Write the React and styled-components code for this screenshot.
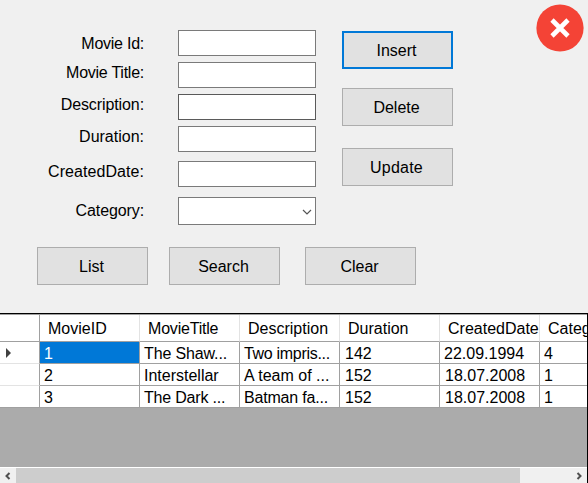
import React from "react";
import styled, { createGlobalStyle } from "styled-components";

const GlobalStyle = createGlobalStyle`
  * { box-sizing: border-box; }
  body { margin: 0; overflow: hidden; }
  button, input { font: inherit; border-radius: 0; }
`;

const Window = styled.main`
  width: 588px;
  height: 483px;
  display: flex;
  flex-direction: column;
  overflow: hidden;
  background: #f0f0f0;
  color: #000;
  font: 16px/18px "Liberation Sans", Arial, sans-serif;
`;

const Editor = styled.section`
  display: flex;
  height: 247px;
`;

const Fields = styled.div`
  width: 316px;
  padding-top: 30px;
`;

const Field = styled.label`
  display: flex;
  justify-content: space-between;
  height: ${(p) => p.$height || 26}px;
  margin-bottom: ${(p) => p.$gap}px;
`;

const Caption = styled.span`
  width: 144px;
  padding-top: ${(p) => p.$top}px;
  text-align: right;
  white-space: nowrap;
  letter-spacing: ${(p) => p.$tracking || 0}px;
`;

const TextBox = styled.input`
  width: 138px;
  height: 26px;
  padding: 2px 4px;
  border: 1px solid ${(p) => (p.$dark ? "#5a5a5a" : "#7a7a7a")};
  background: #fff;
  outline: none;
`;

const ComboBox = styled.div`
  display: flex;
  align-items: center;
  justify-content: flex-end;
  width: 138px;
  height: 28px;
  padding: 2px 3px 0 0;
  border: 1px solid #7a7a7a;
  background: #fff;
`;

const Actions = styled.div`
  display: flex;
  flex-direction: column;
  padding: 31px 0 0 26px;
`;

const Button = styled.button`
  width: 111px;
  height: 38px;
  padding: 2px 2px 0 0;
  margin-bottom: ${(p) => p.$gap || 0}px;
  border: ${(p) => (p.$focused ? "2px solid #0078d7" : "1px solid #adadad")};
  background: #e1e1e1;
  color: #000;
  line-height: 18px;
  letter-spacing: ${(p) => p.$tracking || 0}px;
`;

const CloseButton = styled.button`
  width: 48px;
  height: 48px;
  margin: 4px 4px 0 auto;
  padding: 0;
  border: 0;
  background: none;
  svg { display: block; }
`;

const Commands = styled.div`
  display: flex;
  height: 66px;
  padding-left: 37px;
`;

const CommandSlot = styled.div`
  width: ${(p) => p.$width}px;
`;

const GridFrame = styled.section`
  display: flex;
  flex-direction: column;
  height: 170px;
  border-top: 1px solid #000;
  border-right: 1px solid #000;
  background: #ababab;
`;

const Records = styled.div`
  flex: 1;
  overflow: hidden;
  border-top: 1px solid #a0a0a0;
`;

const Row = styled.div`
  display: grid;
  grid-template-columns: 40px repeat(6, 100px);
  width: 640px;
  height: ${(p) => (p.$header ? 27 : 22)}px;
  background: #fff;
`;

const RowHeader = styled.div`
  display: flex;
  align-items: center;
  padding-left: 6px;
  border-right: 1px solid #a0a0a0;
  border-bottom: 1px solid ${(p) => (p.$strong ? "#a0a0a0" : "#e3e3e3")};
`;

const HeaderCell = styled.div`
  padding: 5px 0 0 8px;
  overflow: hidden;
  white-space: nowrap;
  letter-spacing: ${(p) => p.$tracking || 0}px;
  border-right: 1px solid #e3e3e3;
  border-bottom: 1px solid #a0a0a0;
`;

const Cell = styled.div`
  padding: 3px 0 0 ${(p) => (p.$numeric ? 5 : 4)}px;
  overflow: hidden;
  white-space: nowrap;
  letter-spacing: ${(p) => p.$tracking || 0}px;
  border-right: 1px solid #a0a0a0;
  border-bottom: 1px solid #a0a0a0;
  background: ${(p) => (p.$selected ? "#0078d7" : "#fff")};
  color: ${(p) => (p.$selected ? "#fff" : "#000")};
`;

const Scrollbar = styled.div`
  display: flex;
  align-items: center;
  height: 16px;
  border-top: 1px solid #fff;
  background: #f0f0f0;
`;

const ScrollArrow = styled.div`
  display: flex;
  align-items: center;
  justify-content: center;
  width: 16px;
  height: 15px;
`;

const Thumb = styled.div`
  width: 504px;
  height: 15px;
  margin-right: auto;
  background: #cdcdcd;
`;

const fields = [
  { label: "Movie Id:", gap: 6, top: 5, tracking: -0.25 },
  { label: "Movie Title:", gap: 6, top: 2, tracking: -0.25 },
  { label: "Description:", gap: 6, top: 2, tracking: -0.1, dark: true },
  { label: "Duration:", gap: 9, top: 2 },
  { label: "CreatedDate:", gap: 10, top: 2, tracking: 0.06 },
];

const columns = [
  { name: "MovieID" },
  { name: "MovieTitle", tracking: -0.2 },
  { name: "Description" },
  { name: "Duration" },
  { name: "CreatedDate" },
  { name: "Category" },
];

const records = [
  ["1", "The Shaw...", "Two impris...", "142", "22.09.1994", "4"],
  ["2", "Interstellar", "A team of ...", "152", "18.07.2008", "1"],
  ["3", "The Dark ...", "Batman fa...", "152", "18.07.2008", "1"],
];

const tracking = {
  "The Shaw...": -0.13,
  "Two impris...": -0.3,
  "The Dark ...": -0.2,
  "Batman fa...": -0.18,
};

function Chevron({ left }) {
  return (
    <svg width="8" height="8" viewBox="0 0 8 8" fill="none" stroke="#505050" strokeWidth="2">
      <path d={left ? "M5.5 1 2.5 4l3 3" : "M2.5 1l3 3-3 3"} />
    </svg>
  );
}

export default function App() {
  return (
    <Window>
      <GlobalStyle />
      <Editor>
        <Fields>
          {fields.map((f) => (
            <Field key={f.label} $gap={f.gap}>
              <Caption $top={f.top} $tracking={f.tracking}>{f.label}</Caption>
              <TextBox $dark={f.dark} />
            </Field>
          ))}
          <Field as="div" $height={28} $gap={0}>
            <Caption $top={5} $tracking={-0.1}>Category:</Caption>
            <ComboBox>
              <svg width="10" height="7" viewBox="0 0 10 7" fill="none" stroke="#555" strokeWidth="1.2">
                <path d="M1 1l4 4 4-4" />
              </svg>
            </ComboBox>
          </Field>
        </Fields>
        <Actions>
          <Button $focused $gap={19}>Insert</Button>
          <Button $gap={22}>Delete</Button>
          <Button $tracking={0.2}>Update</Button>
        </Actions>
        <CloseButton aria-label="Close">
          <svg width="48" height="48" viewBox="0 0 48 48">
            <circle cx="24" cy="24" r="23.6" fill="#f44336" />
            <path d="M16 16l16 16M32 16L16 32" stroke="#fff" strokeWidth="4.6" />
          </svg>
        </CloseButton>
      </Editor>
      <Commands>
        <CommandSlot $width={132}><Button>List</Button></CommandSlot>
        <CommandSlot $width={136}><Button>Search</Button></CommandSlot>
        <CommandSlot $width={111}><Button>Clear</Button></CommandSlot>
      </Commands>
      <GridFrame>
        <Records>
          <Row $header>
            <RowHeader $strong />
            {columns.map((c) => (
              <HeaderCell key={c.name} $tracking={c.tracking}>{c.name}</HeaderCell>
            ))}
          </Row>
          {records.map((record, r) => (
            <Row key={record[0]}>
              <RowHeader $strong={r === records.length - 1}>
                {r === 0 && (
                  <svg width="5" height="10" viewBox="0 0 5 10">
                    <path d="M0 0l5 5-5 5z" fill="#404040" />
                  </svg>
                )}
              </RowHeader>
              {record.map((value, c) => (
                <Cell
                  key={c}
                  $selected={r === 0 && c === 0}
                  $numeric={c === 3 || (c === 4 && r > 0)}
                  $tracking={tracking[value]}
                >
                  {value}
                </Cell>
              ))}
            </Row>
          ))}
        </Records>
        <Scrollbar>
          <ScrollArrow><Chevron left /></ScrollArrow>
          <Thumb />
          <ScrollArrow><Chevron /></ScrollArrow>
        </Scrollbar>
      </GridFrame>
    </Window>
  );
}
